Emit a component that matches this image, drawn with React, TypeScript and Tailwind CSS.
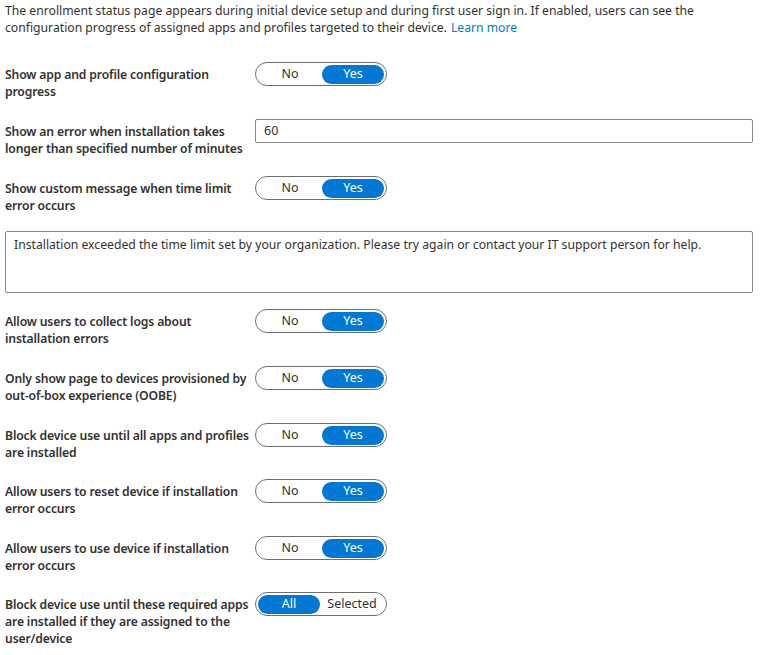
import React from 'react';

type Row = {
  label: string;
  options: [string, string];
  active: 0 | 1;
  height: string;
};

const topRows: Row[] = [
  { label: 'Show app and profile configuration progress', options: ['No', 'Yes'], active: 1, height: 'h-[57px]' },
];

const bottomRows: Row[] = [
  { label: 'Allow users to collect logs about installation errors', options: ['No', 'Yes'], active: 1, height: 'h-[57px]' },
  { label: 'Only show page to devices provisioned by out-of-box experience (OOBE)', options: ['No', 'Yes'], active: 1, height: 'h-[57px]' },
  { label: 'Block device use until all apps and profiles are installed', options: ['No', 'Yes'], active: 1, height: 'h-[56px]' },
  { label: 'Allow users to reset device if installation error occurs', options: ['No', 'Yes'], active: 1, height: 'h-[57px]' },
  { label: 'Allow users to use device if installation error occurs', options: ['No', 'Yes'], active: 1, height: 'h-[56px]' },
  { label: 'Block device use until these required apps are installed if they are assigned to the user/device', options: ['All', 'Selected'], active: 0, height: 'h-[60px]' },
];

function Toggle({ options, active }: { options: [string, string]; active: 0 | 1 }) {
  return (
    <div className="flex h-[24px] w-[132px] shrink-0 items-center rounded-full border border-[#6e6e6e] bg-white p-[2px] text-[12.5px]">
      {options.map((opt, i) => (
        <div
          key={opt}
          className={
            i === active
              ? 'flex h-[19px] w-[62px] items-center justify-center rounded-full bg-[#0078d4] text-white'
              : 'flex h-[19px] flex-1 items-center justify-center text-[#323130]'
          }
        >
          {opt}
        </div>
      ))}
    </div>
  );
}

function SettingRow({ row }: { row: Row }) {
  return (
    <div className={`flex items-start ${row.height}`}>
      <div className="w-[250px] shrink-0 pt-[4px] font-semibold leading-[17px] tracking-[-0.15px] text-[#323130]">{row.label}</div>
      <Toggle options={row.options} active={row.active} />
    </div>
  );
}

export default function App() {
  return (
    <div
      className="h-[655px] w-[760px] overflow-hidden bg-white pl-[5px] text-[12.2px] text-[#323130]"
      style={{ fontFamily: '"Noto Sans", "Open Sans", sans-serif' }}
    >
      <div className="pt-[3px] leading-[16.5px]">
        <div>
          The enrollment status page appears during initial device setup and during first user sign in. If enabled, users can see the
        </div>
        <div className="flex gap-[4px]">
          <span>configuration progress of assigned apps and profiles targeted to their device.</span>
          <span className="text-[#0078d4]">Learn more</span>
        </div>
      </div>

      <div className="mt-[26px]">
        {topRows.map((row) => (
          <SettingRow key={row.label} row={row} />
        ))}

        <div className="flex h-[57px] items-start">
          <div className="w-[250px] shrink-0 pt-[4px] font-semibold leading-[17px] tracking-[-0.15px]">
            Show an error when installation takes longer than specified number of minutes
          </div>
          <div className="flex h-[24px] w-[498px] items-center rounded-[2px] border border-[#8a8886] pl-[8px] text-[12.5px]">60</div>
        </div>

        <div className="flex h-[55px] items-start">
          <div className="w-[250px] shrink-0 pt-[4px] font-semibold leading-[17px] tracking-[-0.15px]">
            Show custom message when time limit error occurs
          </div>
          <Toggle options={['No', 'Yes']} active={1} />
        </div>

        <div className="mb-[16px] h-[62px] w-[748px] rounded-[2px] border border-[#8a8886] px-[8px] pt-[4px] leading-[17px]">
          Installation exceeded the time limit set by your organization. Please try again or contact your IT support person for help.
        </div>

        {bottomRows.map((row) => (
          <SettingRow key={row.label} row={row} />
        ))}
      </div>
    </div>
  );
}
